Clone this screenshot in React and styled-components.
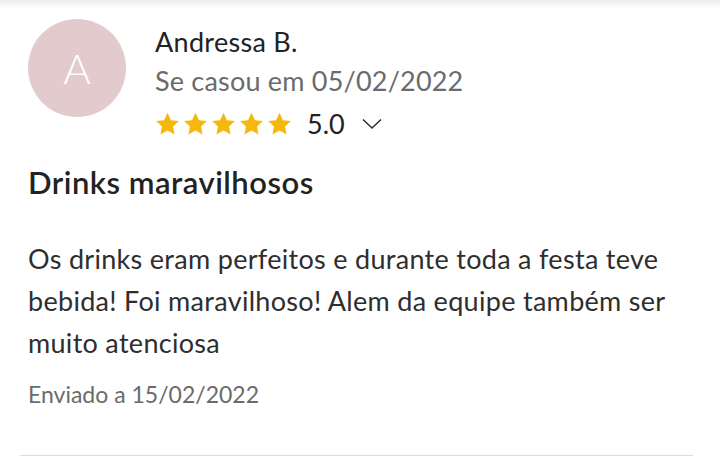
import React from 'react'
import styled, { createGlobalStyle } from 'styled-components'

const GlobalStyle = createGlobalStyle`
  html, body {
    margin: 0;
    padding: 0;
    background: #fff;
  }
  body {
    font-family: Lato, 'Open Sans', sans-serif;
    -webkit-font-smoothing: antialiased;
  }
`

const Page = styled.div`
  width: 720px;
  height: 463px;
  box-sizing: border-box;
  overflow: hidden;
  background: linear-gradient(to bottom, #ececec 0px, #f7f7f7 4px, #fff 10px);
`

const Review = styled.article`
  margin: 0 27px 0 20px;
  padding: 19px 0 0 8px;
  height: 456px;
  box-sizing: border-box;
  border-bottom: 1.5px solid #dcdcdc;
  display: flex;
  flex-direction: column;
`

const Header = styled.div`
  display: flex;
  align-items: flex-start;
  gap: 29px;
`

const Avatar = styled.div`
  width: 98px;
  height: 98px;
  flex: none;
  border-radius: 50%;
  background: #e3cacd;
  color: #fff;
  font-size: 42px;
  font-weight: 300;
  display: flex;
  align-items: center;
  justify-content: center;
`

const Meta = styled.div`
  display: flex;
  flex-direction: column;
  padding-top: 4px;
`

const Name = styled.div`
  font-size: 27px;
  line-height: 38px;
  color: #222;
  letter-spacing: 0.3px;
`

const Married = styled.div`
  font-size: 27px;
  line-height: 40px;
  color: #6b6b6b;
  letter-spacing: 0.2px;
`

const RatingRow = styled.div`
  display: flex;
  align-items: center;
  margin-top: 6px;
`

const Stars = styled.div`
  display: flex;
  gap: 3px;
  margin-right: 15px;
`

const Score = styled.span`
  font-size: 27px;
  color: #222;
  margin-right: 17px;
`

const Title = styled.h2`
  margin: 22px 0 0;
  font-size: 31px;
  font-weight: 600;
  letter-spacing: 0.5px;
  color: #222;
  line-height: 40px;
`

const Body = styled.p`
  margin: 36px 0 0;
  font-size: 27px;
  line-height: 42px;
  letter-spacing: 0.3px;
  color: #2e2e2e;
  max-width: 680px;
`

const Sent = styled.div`
  margin-top: 16px;
  font-size: 23px;
  color: #6b6b6b;
`

const Star = () => (
  <svg width="25" height="24" viewBox="0 0 24 23">
    <path
      d="M12 0.8l3.3 7 7.6 0.9-5.6 5.2 1.5 7.6L12 17.7l-6.8 3.8 1.5-7.6L1.1 8.7l7.6-0.9z"
      fill="#f6b70f"
    />
  </svg>
)

const Chevron = () => (
  <svg width="20" height="12" viewBox="0 0 20 12">
    <path d="M1 1.5l9 8.5 9-8.5" fill="none" stroke="#333" strokeWidth="1.6" />
  </svg>
)

export default function App() {
  return (
    <Page>
      <GlobalStyle />
      <Review>
        <Header>
          <Avatar>A</Avatar>
          <Meta>
            <Name>Andressa B.</Name>
            <Married>Se casou em 05/02/2022</Married>
            <RatingRow>
              <Stars>
                {[0, 1, 2, 3, 4].map((i) => (
                  <Star key={i} />
                ))}
              </Stars>
              <Score>5.0</Score>
              <Chevron />
            </RatingRow>
          </Meta>
        </Header>
        <Title>Drinks maravilhosos</Title>
        <Body>
          Os drinks eram perfeitos e durante toda a festa teve bebida! Foi
          maravilhoso! Alem da equipe também ser muito atenciosa
        </Body>
        <Sent>Enviado a 15/02/2022</Sent>
      </Review>
    </Page>
  )
}
